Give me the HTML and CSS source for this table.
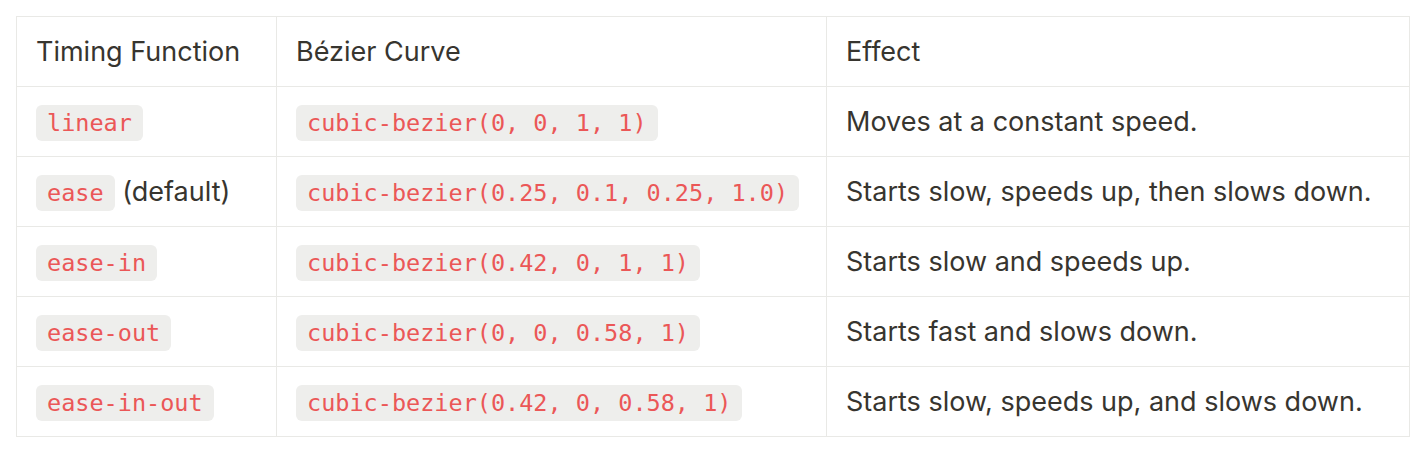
FILE: index.html
```html
<!DOCTYPE html>
<html>
<head>
<meta charset="utf-8">
<link rel="stylesheet" href="styles.css">
</head>
<body>
<table class="timing-table">
  <colgroup>
    <col class="col-name">
    <col class="col-curve">
    <col class="col-effect">
  </colgroup>
  <thead>
    <tr><th>Timing Function</th><th>Bézier Curve</th><th>Effect</th></tr>
  </thead>
  <tbody>
    <tr><td><code>linear</code></td><td><code>cubic-bezier(0, 0, 1, 1)</code></td><td>Moves at a constant speed.</td></tr>
    <tr><td><code>ease</code> (default)</td><td><code>cubic-bezier(0.25, 0.1, 0.25, 1.0)</code></td><td>Starts slow, speeds up, then slows down.</td></tr>
    <tr><td><code>ease-in</code></td><td><code>cubic-bezier(0.42, 0, 1, 1)</code></td><td>Starts slow and speeds up.</td></tr>
    <tr><td><code>ease-out</code></td><td><code>cubic-bezier(0, 0, 0.58, 1)</code></td><td>Starts fast and slows down.</td></tr>
    <tr><td><code>ease-in-out</code></td><td><code>cubic-bezier(0.42, 0, 0.58, 1)</code></td><td>Starts slow, speeds up, and slows down.</td></tr>
  </tbody>
</table>
</body>
</html>
```

FILE: styles.css
```css
html, body {
  margin: 0;
  background: #ffffff;
}
body {
  padding: 16px;
  font-family: Inter, "Noto Sans", sans-serif;
  color: #37352f;
}
.timing-table {
  border-collapse: collapse;
  table-layout: fixed;
  width: 1393px;
}
.col-name { width: 260px; }
.col-curve { width: 550px; }
.col-effect { width: 583px; }
.timing-table th,
.timing-table td {
  border: 1px solid #e9e9e6;
  height: 70px;
  padding: 0 19px;
  text-align: left;
  vertical-align: middle;
  font-weight: 400;
  font-size: 27px;
  line-height: 1.3;
  white-space: nowrap;
  box-sizing: border-box;
}
.timing-table code {
  font-family: "DejaVu Sans Mono", monospace;
  font-size: 23.5px;
  color: #eb5757;
  background: #eeeeec;
  border-radius: 6px;
  padding: 4px 11px;
}
```
